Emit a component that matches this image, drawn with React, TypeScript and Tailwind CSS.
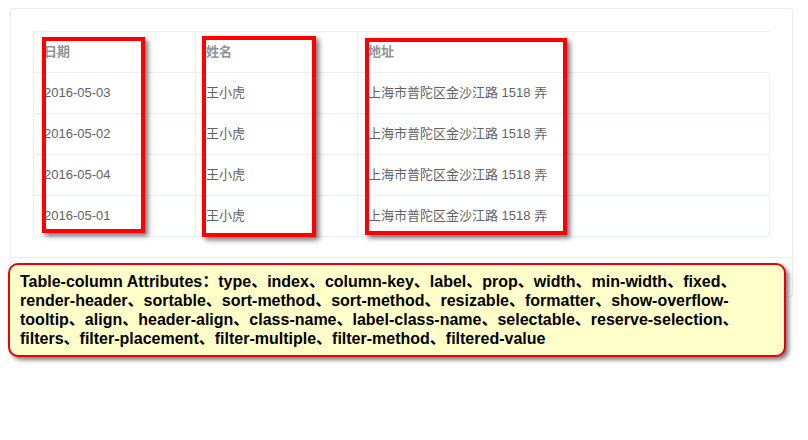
const rows = [
  { date: '2016-05-03', name: '王小虎', address: '上海市普陀区金沙江路 1518 弄' },
  { date: '2016-05-02', name: '王小虎', address: '上海市普陀区金沙江路 1518 弄' },
  { date: '2016-05-04', name: '王小虎', address: '上海市普陀区金沙江路 1518 弄' },
  { date: '2016-05-01', name: '王小虎', address: '上海市普陀区金沙江路 1518 弄' },
];

const font = { fontFamily: '"Liberation Sans", "Noto Sans CJK SC", sans-serif' };

const attrs =
  'Table-column Attributes：type、index、column-key、label、prop、width、min-width、fixed、render-header、sortable、sort-method、sort-method、resizable、formatter、show-overflow-tooltip、align、header-align、class-name、label-class-name、selectable、reserve-selection、filters、filter-placement、filter-multiple、filter-method、filtered-value';

function Cell({ children, head, last }: { children: React.ReactNode; head?: boolean; last?: boolean }) {
  return (
    <div
      className={`flex h-[41px] items-center border-b border-r border-[#ebeef5] pl-[10px] text-[13px] ${
        head ? 'font-semibold text-[#909399]' : 'text-[#606266]'
      } ${last && head ? 'border-r-transparent' : ''}`}
    >
      {children}
    </div>
  );
}

export default function App() {
  return (
    <div className="relative min-h-[440px] bg-white pl-[10px] pt-2" style={font}>
      <div className="w-[783px] rounded-[3px] border border-[#ebebeb]">
        <div className="relative px-[22px] pb-[20px] pt-[22px]">
          <div className="grid grid-cols-[162px_162px_412px] border-l border-t border-[#ebeef5]">
            <Cell head>日期</Cell>
            <Cell head>姓名</Cell>
            <Cell head last>地址</Cell>
            {rows.map((r, i) => (
              <>
                <Cell key={`d${i}`}>{r.date}</Cell>
                <Cell key={`n${i}`}>{r.name}</Cell>
                <Cell key={`a${i}`} last>{r.address}</Cell>
              </>
            ))}
          </div>

          {/* annotation boxes */}
          <div className="absolute left-[31px] top-[28px] h-[196px] w-[103px] border-4 border-[#ff0000] shadow-[3px_3px_5px_rgba(0,0,0,0.55)]" />
          <div className="absolute left-[191px] top-[27px] h-[201px] w-[114px] border-4 border-[#ff0000] shadow-[3px_3px_5px_rgba(0,0,0,0.55)]" />
          <div className="absolute left-[354px] top-[29px] h-[197px] w-[202px] border-4 border-[#ff0000] shadow-[3px_3px_5px_rgba(0,0,0,0.55)]" />
        </div>
        <div className="h-[39px] border-t border-[#eaeefb]" />
      </div>

      <div className="absolute left-2 top-[263px] w-[778px] rounded-[10px] border-2 border-[#e8000b] bg-[#ffffca] px-[10px] py-[7px] text-[16px] font-bold leading-[19px] text-black shadow-[3px_3px_4px_rgba(0,0,0,0.5)]">
        {attrs}
      </div>
    </div>
  );
}
